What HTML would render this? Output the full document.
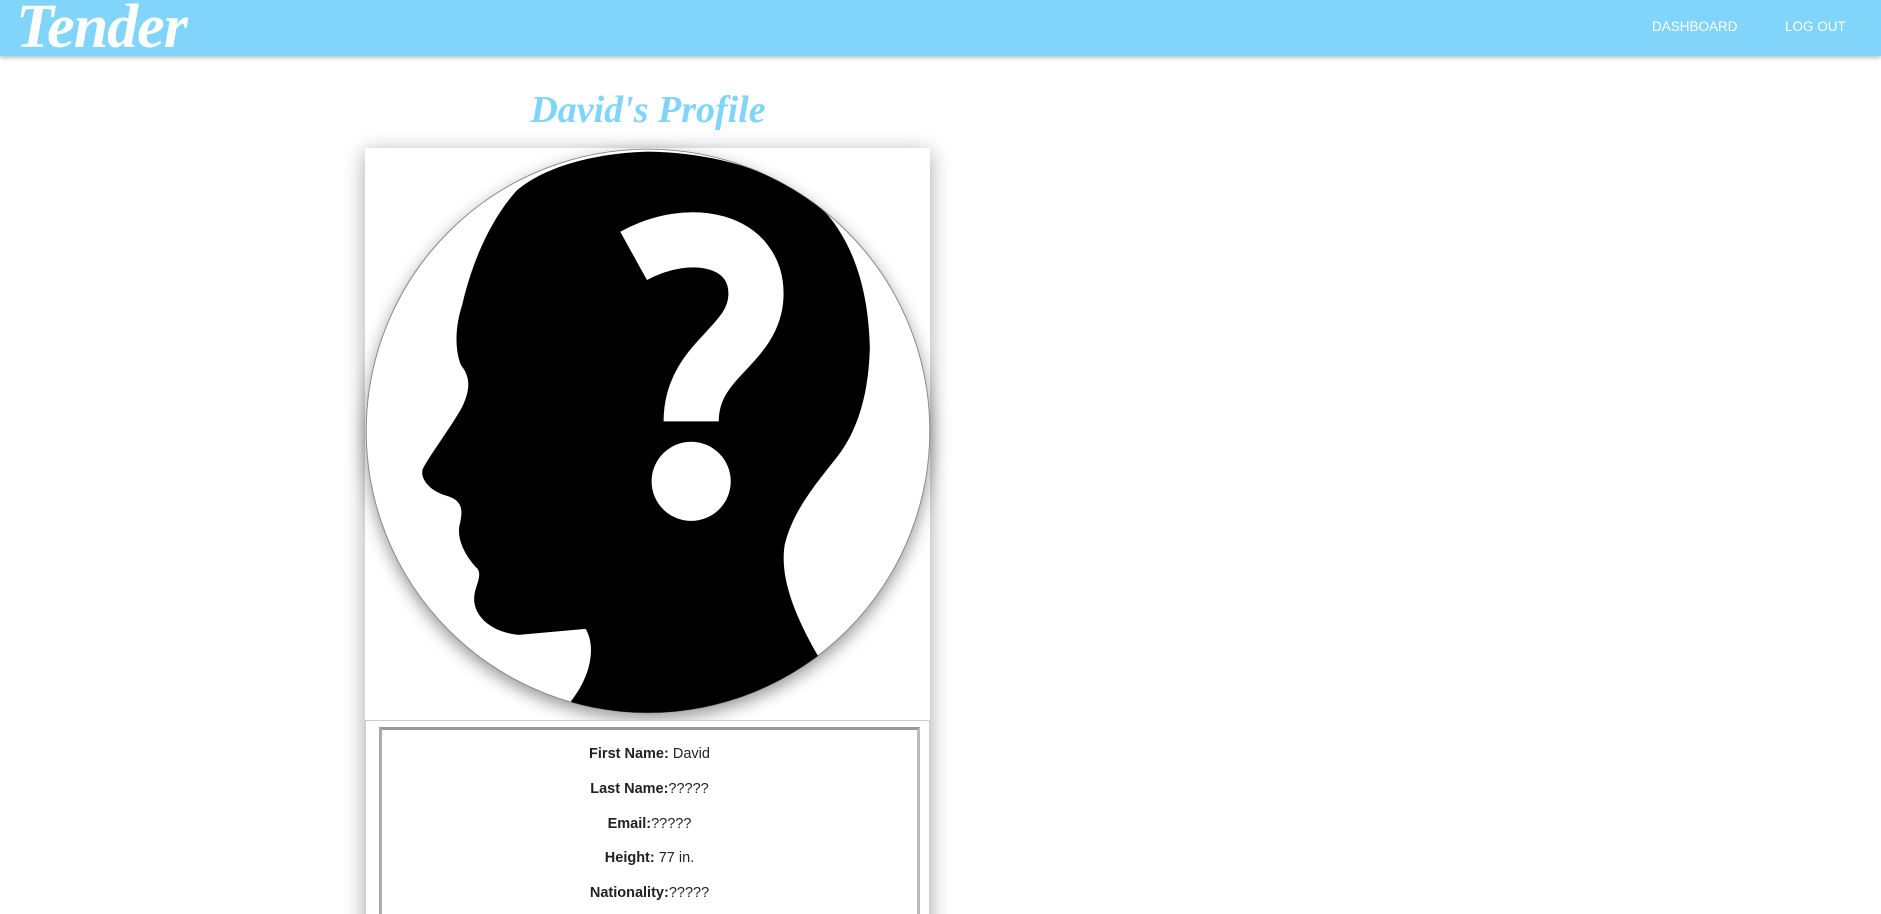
<!DOCTYPE html>
<html style="margin:0;width:1881px;height:914px;overflow:hidden"><head><meta charset="utf-8"><style>
body{margin:0;width:1881px;height:914px;overflow:hidden;background:#fff;font-family:"Liberation Sans",sans-serif;position:relative}
#w{position:absolute;left:0;top:0;width:1881px;height:914px;overflow:hidden}
.nav{position:absolute;left:0;top:0;width:1881px;height:56px;background:#81d4fa;box-shadow:0 2px 4px rgba(0,0,0,.25);z-index:2}
.logo{position:absolute;left:16px;top:-8px;color:#fff;font-family:"Liberation Serif",serif;font-style:italic;font-weight:bold;font-size:62px;letter-spacing:-1px}
.nl{position:absolute;top:19px;color:#fff;font-size:13.5px}
.title{position:absolute;left:448px;width:400px;text-align:center;top:88px;color:#81d4fa;font-family:"Liberation Serif",serif;font-style:italic;font-weight:bold;font-size:38px}
.card{position:absolute;left:365px;top:148px;width:565px;height:800px;background:#fff;box-shadow:0 4px 20px rgba(0,0,0,.35)}
.info{position:absolute;left:365px;top:720px;width:563px;height:220px;border:1px solid #ccc;border-bottom:none;background:#fff}
.inner{position:absolute;left:13px;top:6px;width:535px;height:220px;border:3px solid #999;border-bottom:none;border-right-color:#bbb;border-left-color:#aaa}
.inner p{margin:0;position:absolute;left:0;right:0;text-align:center;font-size:14.5px;color:#222}
b{color:#222}
</style></head><body><div id="w">
<div class="nav"><div class="logo">Tender</div>
<div class="nl" style="left:1652px">DASHBOARD</div><div class="nl" style="left:1785px">LOG OUT</div></div>
<div class="title">David's Profile</div>
<div class="card"></div>
<svg style="position:absolute;left:365px;top:148px;filter:drop-shadow(0 6px 8px rgba(0,0,0,.4))" width="566" height="566" viewBox="304 124 472 472">
<defs><clipPath id="c"><circle cx="540" cy="360" r="235"/></clipPath></defs>
<circle cx="540" cy="360" r="235" fill="#fff" stroke="#888" stroke-width="0.8"/>
<g clip-path="url(#c)">
<path fill="#000" d="M476,600 L476,585 C492,565 497,540 488,525 L432,530 C410,528 395,515 395,500 C395,490 402,482 398,475 C388,465 380,450 383,438 C386,425 385,418 372,414 C358,410 350,400 352,392 C358,380 375,358 385,340 C392,325 392,315 384,305 C378,290 380,270 385,255 C393,220 408,185 430,160 C455,138 500,128 540,127 C600,128 655,145 690,180 C715,210 724,250 725,290 C724,335 712,365 695,385 C675,410 660,430 654,455 C650,480 660,510 682,548 L700,600 Z"/>
<path fill="none" stroke="#fff" stroke-width="46" d="M528,214 C575,188 632,200 630,248 C628,290 576,300 576,352"/>
<circle cx="576" cy="402" r="33" fill="#fff"/>
</g></svg>
<div class="info"><div class="inner">
<p style="top:16px"><b>First Name:</b> David</p>
<p style="top:51px"><b>Last Name:</b>?????</p>
<p style="top:86px"><b>Email:</b>?????</p>
<p style="top:120px"><b>Height:</b> 77 in.</p>
<p style="top:155px"><b>Nationality:</b>?????</p>
</div></div>
</div></body></html>
